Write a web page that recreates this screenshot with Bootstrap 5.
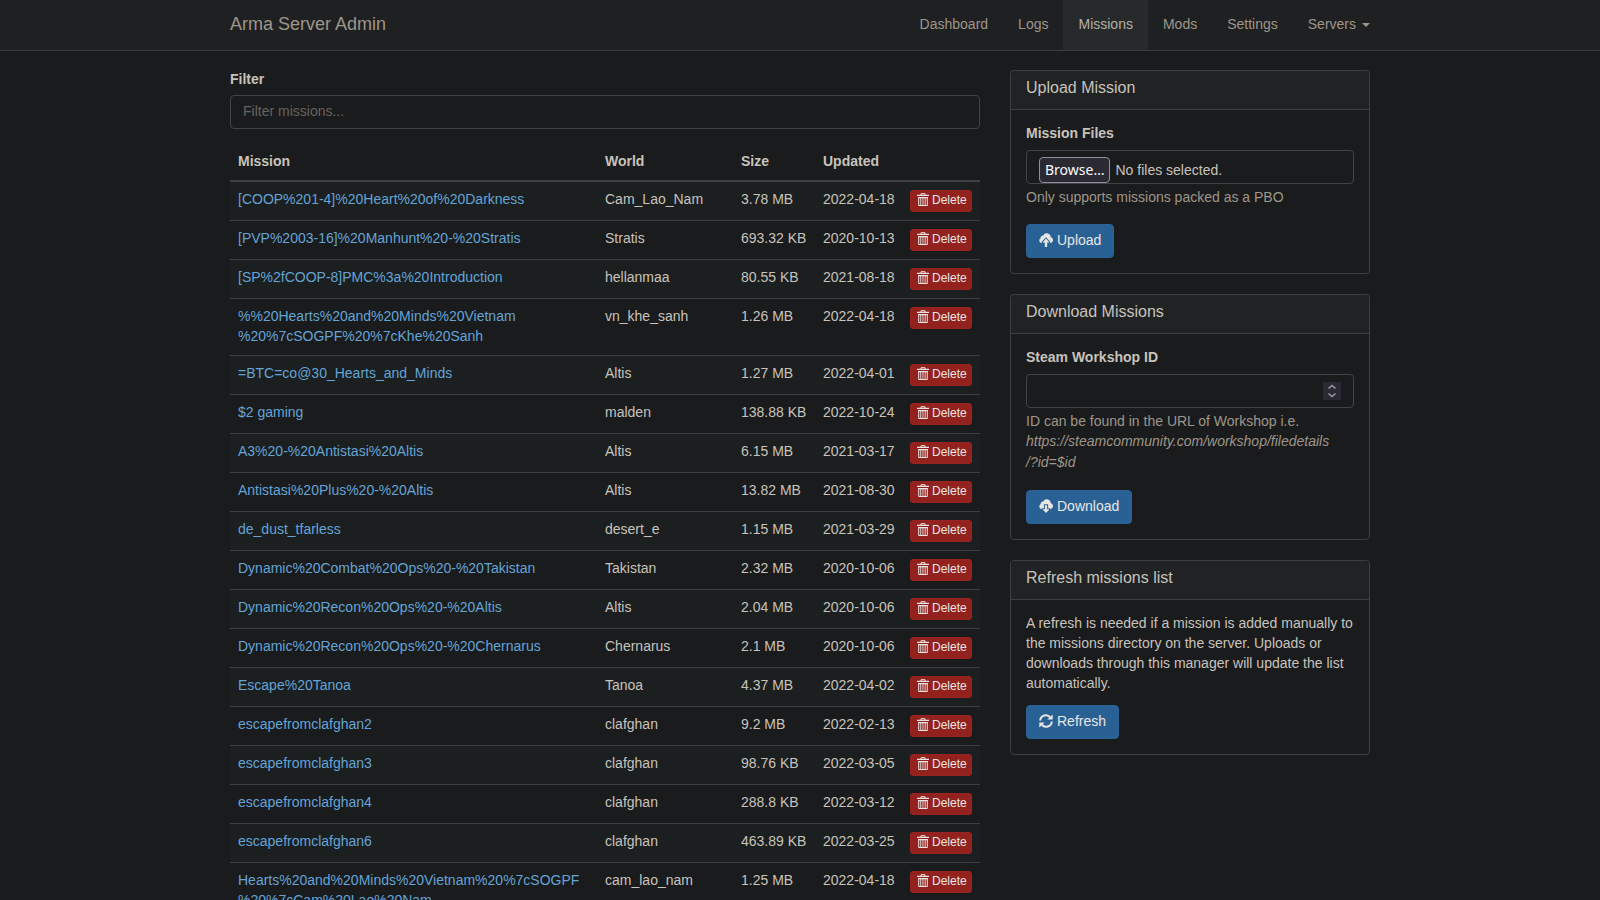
<!DOCTYPE html>
<html lang="en" data-bs-theme="dark">
<head>
<meta charset="utf-8">
<meta name="viewport" content="width=device-width, initial-scale=1">
<title>Arma Server Admin - Missions</title>
<link href="https://cdn.jsdelivr.net/npm/bootstrap@5.3.0/dist/css/bootstrap.min.css" rel="stylesheet">
<style>
:root { --page: #1a1b1d; --line: #3c4042; --ink: #c8c3bc; --muted: #9e9689; --link: #64a4d6; --soft: #e8e6e3; }
body { background: var(--page); color: var(--ink); font: 14px/20px "Liberation Sans", Arial, sans-serif; padding-top: 70px; }
.container { max-width: 1170px; padding: 0 15px; }
.top-bar { background: #1e2022; border-bottom: 1px solid #383c3e; padding: 0; }
.top-bar .navbar-brand { color: var(--muted); font-size: 18px; line-height: 20px; padding: 14px 0 16px; margin: 0; }
.top-bar .navbar-nav { margin-right: -15px; }
.top-bar .navbar-nav .nav-link { color: var(--muted); padding: 14px 15px 16px; }
.top-bar .navbar-nav .nav-link.active { background: #262a2b; color: #b5afa6; }
.top-bar .dropdown-toggle::after { border-width: 4px 4px 0; margin-left: 6px; vertical-align: 2px; }
.content-row { --bs-gutter-x: 30px; }
.form-label { display: block; font-weight: 700; line-height: 18px; margin-bottom: 7px; }
.card-body .form-label { line-height: 20px; }
.form-control, .form-control:focus { background: var(--page); border: 1px solid #404547; border-radius: 4px; color: var(--ink); font-size: 14px; line-height: 20px; height: 34px; padding: 5px 12px 7px; }
.filter-box { margin-bottom: 15px; }
.form-control::placeholder { color: #66635e; }
.missions { --bs-table-bg: transparent; --bs-table-color: var(--ink); --bs-table-striped-bg: #1b1f20; --bs-table-striped-color: var(--ink); color: var(--ink); border-color: var(--line); table-layout: fixed; }
.missions > :not(caption) > * > * { padding: 7px 8px 9px; border-bottom: 1px solid var(--line); }
.missions > tbody > tr > td:last-child { padding: 8px; }
.missions > thead > tr > th { border-bottom-width: 2px; }
.missions a { color: var(--link); text-decoration: none; }
.missions td { white-space: nowrap; }
.missions td:first-child { white-space: normal; }
.w-world { width: 136px; } .w-size { width: 82px; } .w-date { width: 87px; } .w-act { width: 78px; }
.btn { --bs-btn-border-radius: 4px; --bs-btn-font-size: 14px; --bs-btn-line-height: 20px; display: inline-flex; color: var(--soft); }
.btn-primary { --bs-btn-bg: #2a6195; --bs-btn-border-color: #2b6398; gap: 4px; height: 34px; padding: 5px 12px 7px; }
.btn-delete { --bs-btn-bg: #93221f; --bs-btn-border-color: #982320; --bs-btn-border-radius: 3px; font-size: 12px; line-height: 18px; height: 22px; padding: 0 4px 2px 6px; gap: 3px; display: flex; }
.btn-primary svg { width: 14px; height: 14px; margin-top: 3px; }
.btn-delete svg { width: 12px; height: 14px; margin-top: 2px; }
.card { background: var(--page); border: 1px solid var(--line); border-radius: 4px; margin-bottom: 20px; }
.card-header { background: #202223; border-bottom: 1px solid var(--line); padding: 8px 15px 12px; }
.card-header h3 { color: var(--ink); font-size: 16px; line-height: 18px; font-weight: 400; margin: 0; }
.card-body { padding: 13px 15px 15px; color: var(--ink); }
.card-body p { margin-bottom: 12px; }
.help-note { color: var(--muted); margin: 3px 0 17px; }
.help-note em { display: block; line-height: 21px; }
.help-note em span { display: block; }
.file-box { position: relative; display: flex; align-items: flex-start; gap: 5px; overflow: hidden; padding: 6px 12px; }
.file-box input { position: absolute; inset: 0; width: 100%; opacity: 0; }
.file-btn { flex: none; background: #2b2a33; border: 1px solid #8f8f9d; border-radius: 4px; color: #fbfbfe; font-family: "Noto Sans", sans-serif; line-height: 24px; height: 26px; padding: 0 5px; }
.file-text { line-height: 26px; }
.id-box { position: relative; }
.id-box input { appearance: textfield; -moz-appearance: textfield; }
.id-box input::-webkit-inner-spin-button { appearance: none; }
.id-box svg { position: absolute; right: 13px; top: 8px; width: 18px; height: 18px; background: #2b2a33; pointer-events: none; }
</style>
</head>
<body>
<svg class="d-none" aria-hidden="true">
  <symbol id="trash" viewBox="0 0 12 14"><path fill="none" stroke="currentColor" d="M4 2V.7h4V2M1.700 4.500v8h8.600v-8z"/><path fill="currentColor" d="M0 1.700h12v1.200H0zM1.200 4h9.600v1.300H1.200zM3.300 5h.9v7h-.9zM5.500 5h.9v7h-.9zM7.700 5h.9v7h-.9z"/></symbol>
  <symbol id="cloud" viewBox="0 0 14 14"><path fill="currentColor" d="M2.600 10A2.600 2.600 0 0 1 1.700 5.100C1.500 3.300 3 2.200 4.300 2.500 5.200.8 6.600.2 8.100.3c2.200.2 3.700 1.900 3.700 4 1.300.3 2.200 1.400 2.200 2.800C14 8.800 12.800 10 11.200 10z"/></symbol>
  <symbol id="upload" viewBox="0 0 14 14"><use href="#cloud"/><path fill="#2a6195" d="M7 4.200l4.200 4.600V11H2.800V8.800z"/><path fill="currentColor" d="M7 5.600l3.500 4H8.200V14H5.800V9.600H3.500z"/></symbol>
  <symbol id="download" viewBox="0 0 14 14"><use href="#cloud"/><path fill="#2a6195" d="M4.900 5.200h4.200v4h2.400L9.500 11h-5L2.500 9.200h2.400z"/><path fill="currentColor" d="M5.900 6.200h2.200v4h2.500L7 14l-3.600-3.800h2.500z"/></symbol>
  <symbol id="refresh" viewBox="0 0 14 14"><path fill="none" stroke="currentColor" stroke-width="2" d="M1.200 6.500A5.700 5.700 0 0 1 11.300 3.300M12.800 7.500A5.700 5.700 0 0 1 2.700 10.700"/><path fill="currentColor" d="M13.700.4v5.200H8.400zM.3 13.600V8.400h5.300z"/></symbol>
</svg>

<nav class="navbar navbar-expand fixed-top top-bar">
  <div class="container">
    <a class="navbar-brand" href="#">Arma Server Admin</a>
    <ul class="navbar-nav ms-auto">
      <li class="nav-item"><a class="nav-link" href="#">Dashboard</a></li>
      <li class="nav-item"><a class="nav-link" href="#">Logs</a></li>
      <li class="nav-item"><a class="nav-link active" aria-current="page" href="#">Missions</a></li>
      <li class="nav-item"><a class="nav-link" href="#">Mods</a></li>
      <li class="nav-item"><a class="nav-link" href="#">Settings</a></li>
      <li class="nav-item dropdown"><a class="nav-link dropdown-toggle" href="#" role="button">Servers</a></li>
    </ul>
  </div>
</nav>

<main class="container">
  <div class="row content-row">
    <div class="col-8">
      <label class="form-label" for="filter">Filter</label>
      <input class="form-control filter-box" id="filter" type="text" placeholder="Filter missions...">
      <table class="table table-striped missions">
        <thead><tr><th>Mission</th><th class="w-world">World</th><th class="w-size">Size</th><th class="w-date">Updated</th><th class="w-act"></th></tr></thead>
        <tbody>
          <tr><td><a href="#">[COOP%201-4]%20Heart%20of%20Darkness</a></td><td>Cam_Lao_Nam</td><td>3.78 MB</td><td>2022-04-18</td><td><button class="btn btn-danger btn-delete" type="button"><svg><use href="#trash"/></svg>Delete</button></td></tr>
          <tr><td><a href="#">[PVP%2003-16]%20Manhunt%20-%20Stratis</a></td><td>Stratis</td><td>693.32 KB</td><td>2020-10-13</td><td><button class="btn btn-danger btn-delete" type="button"><svg><use href="#trash"/></svg>Delete</button></td></tr>
          <tr><td><a href="#">[SP%2fCOOP-8]PMC%3a%20Introduction</a></td><td>hellanmaa</td><td>80.55 KB</td><td>2021-08-18</td><td><button class="btn btn-danger btn-delete" type="button"><svg><use href="#trash"/></svg>Delete</button></td></tr>
          <tr><td><a href="#">%%20Hearts%20and%20Minds%20Vietnam<wbr>%20%7cSOGPF%20%7cKhe%20Sanh</a></td><td>vn_khe_sanh</td><td>1.26 MB</td><td>2022-04-18</td><td><button class="btn btn-danger btn-delete" type="button"><svg><use href="#trash"/></svg>Delete</button></td></tr>
          <tr><td><a href="#">=BTC=co@30_Hearts_and_Minds</a></td><td>Altis</td><td>1.27 MB</td><td>2022-04-01</td><td><button class="btn btn-danger btn-delete" type="button"><svg><use href="#trash"/></svg>Delete</button></td></tr>
          <tr><td><a href="#">$2 gaming</a></td><td>malden</td><td>138.88 KB</td><td>2022-10-24</td><td><button class="btn btn-danger btn-delete" type="button"><svg><use href="#trash"/></svg>Delete</button></td></tr>
          <tr><td><a href="#">A3%20-%20Antistasi%20Altis</a></td><td>Altis</td><td>6.15 MB</td><td>2021-03-17</td><td><button class="btn btn-danger btn-delete" type="button"><svg><use href="#trash"/></svg>Delete</button></td></tr>
          <tr><td><a href="#">Antistasi%20Plus%20-%20Altis</a></td><td>Altis</td><td>13.82 MB</td><td>2021-08-30</td><td><button class="btn btn-danger btn-delete" type="button"><svg><use href="#trash"/></svg>Delete</button></td></tr>
          <tr><td><a href="#">de_dust_tfarless</a></td><td>desert_e</td><td>1.15 MB</td><td>2021-03-29</td><td><button class="btn btn-danger btn-delete" type="button"><svg><use href="#trash"/></svg>Delete</button></td></tr>
          <tr><td><a href="#">Dynamic%20Combat%20Ops%20-%20Takistan</a></td><td>Takistan</td><td>2.32 MB</td><td>2020-10-06</td><td><button class="btn btn-danger btn-delete" type="button"><svg><use href="#trash"/></svg>Delete</button></td></tr>
          <tr><td><a href="#">Dynamic%20Recon%20Ops%20-%20Altis</a></td><td>Altis</td><td>2.04 MB</td><td>2020-10-06</td><td><button class="btn btn-danger btn-delete" type="button"><svg><use href="#trash"/></svg>Delete</button></td></tr>
          <tr><td><a href="#">Dynamic%20Recon%20Ops%20-%20Chernarus</a></td><td>Chernarus</td><td>2.1 MB</td><td>2020-10-06</td><td><button class="btn btn-danger btn-delete" type="button"><svg><use href="#trash"/></svg>Delete</button></td></tr>
          <tr><td><a href="#">Escape%20Tanoa</a></td><td>Tanoa</td><td>4.37 MB</td><td>2022-04-02</td><td><button class="btn btn-danger btn-delete" type="button"><svg><use href="#trash"/></svg>Delete</button></td></tr>
          <tr><td><a href="#">escapefromclafghan2</a></td><td>clafghan</td><td>9.2 MB</td><td>2022-02-13</td><td><button class="btn btn-danger btn-delete" type="button"><svg><use href="#trash"/></svg>Delete</button></td></tr>
          <tr><td><a href="#">escapefromclafghan3</a></td><td>clafghan</td><td>98.76 KB</td><td>2022-03-05</td><td><button class="btn btn-danger btn-delete" type="button"><svg><use href="#trash"/></svg>Delete</button></td></tr>
          <tr><td><a href="#">escapefromclafghan4</a></td><td>clafghan</td><td>288.8 KB</td><td>2022-03-12</td><td><button class="btn btn-danger btn-delete" type="button"><svg><use href="#trash"/></svg>Delete</button></td></tr>
          <tr><td><a href="#">escapefromclafghan6</a></td><td>clafghan</td><td>463.89 KB</td><td>2022-03-25</td><td><button class="btn btn-danger btn-delete" type="button"><svg><use href="#trash"/></svg>Delete</button></td></tr>
          <tr><td><a href="#">Hearts%20and%20Minds%20Vietnam%20%7cSOGPF<wbr>%20%7cCam%20Lao%20Nam</a></td><td>cam_lao_nam</td><td>1.25 MB</td><td>2022-04-18</td><td><button class="btn btn-danger btn-delete" type="button"><svg><use href="#trash"/></svg>Delete</button></td></tr>
        </tbody>
      </table>
    </div>
    <div class="col-4">
      <section class="card">
        <div class="card-header"><h3>Upload Mission</h3></div>
        <div class="card-body">
          <label class="form-label" for="files">Mission Files</label>
          <div class="form-control file-box"><span class="file-btn">Browse…</span><span class="file-text">No files selected.</span><input id="files" type="file" multiple></div>
          <div class="help-note">Only supports missions packed as a PBO</div>
          <button class="btn btn-primary" type="button"><svg><use href="#upload"/></svg>Upload</button>
        </div>
      </section>
      <section class="card">
        <div class="card-header"><h3>Download Missions</h3></div>
        <div class="card-body">
          <label class="form-label" for="workshop">Steam Workshop ID</label>
          <div class="id-box"><input class="form-control" id="workshop" type="number"><svg viewBox="0 0 18 18" fill="none" stroke="#9b9aa6" stroke-width="1.500"><path d="M5.500 6.500L9 3.500l3.500 3M5.500 11.500l3.500 3 3.500-3"/></svg></div>
          <div class="help-note">ID can be found in the URL of Workshop i.e. <em><span>https://steamcommunity.com/workshop/filedetails</span><span>/?id=$id</span></em></div>
          <button class="btn btn-primary" type="button"><svg><use href="#download"/></svg>Download</button>
        </div>
      </section>
      <section class="card">
        <div class="card-header"><h3>Refresh missions list</h3></div>
        <div class="card-body">
          <p>A refresh is needed if a mission is added manually to the missions directory on the server. Uploads or downloads through this manager will update the list automatically.</p>
          <button class="btn btn-primary" type="button"><svg><use href="#refresh"/></svg>Refresh</button>
        </div>
      </section>
    </div>
  </div>
</main>
<script src="https://cdn.jsdelivr.net/npm/bootstrap@5.3.0/dist/js/bootstrap.bundle.min.js"></script>
</body>
</html>
